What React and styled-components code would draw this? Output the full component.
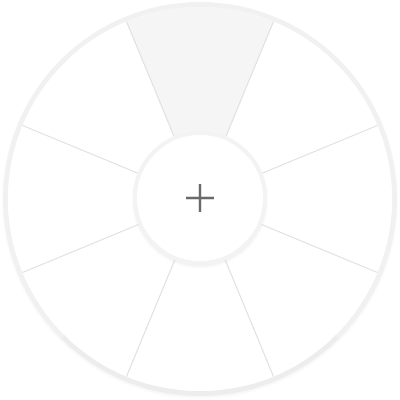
import React from "react";
import styled, { createGlobalStyle } from "styled-components";

const GlobalStyle = createGlobalStyle`
  html, body {
    margin: 0;
    padding: 0;
    background: #ffffff;
    font-family: "Liberation Sans", Arial, sans-serif;
  }
`;

const Page = styled.div`
  width: 400px;
  height: 400px;
  display: flex;
  align-items: flex-start;
  justify-content: center;
  padding-top: 2px;
  box-sizing: border-box;
`;

const Wheel = styled.div`
  width: 394px;
  height: 394px;
  box-sizing: border-box;
  border-radius: 50%;
  border: 5px solid #f1f1f1;
  border-bottom-color: #ededed;
  background: #ffffff;
  box-shadow: 0 2px 3px rgba(0, 0, 0, 0.04);
  display: grid;
  place-items: center;
  overflow: hidden;
  & > * {
    grid-area: 1 / 1;
  }
`;

const Segments = styled.svg`
  width: 384px;
  height: 384px;
  display: block;
`;

const CenterButton = styled.button`
  width: 134px;
  height: 134px;
  box-sizing: border-box;
  border-radius: 50%;
  border: 4px solid #f3f3f3;
  background: #ffffff;
  box-shadow: 0 2px 3px rgba(0, 0, 0, 0.06);
  display: flex;
  align-items: center;
  justify-content: center;
  padding: 0;
  margin-top: -2px;
  cursor: pointer;
`;

const C = 192;
const R = 192;
const COUNT = 8;
const STEP = 360 / COUNT;

const point = (deg, r) => {
  const a = ((deg - 90) * Math.PI) / 180;
  return [C + r * Math.cos(a), C + r * Math.sin(a)];
};

const wedge = (start, end, r) => {
  const [x1, y1] = point(start, r);
  const [x2, y2] = point(end, r);
  return `M${C} ${C} L${x1} ${y1} A${r} ${r} 0 0 1 ${x2} ${y2} Z`;
};

const segments = Array.from({ length: COUNT }, (_, i) => ({
  id: i,
  start: i * STEP - STEP / 2,
  end: i * STEP + STEP / 2,
  active: i === 0,
}));

const PlusIcon = () => (
  <svg width="30" height="30" viewBox="0 0 30 30">
    <line x1="15" y1="1" x2="15" y2="29" stroke="#6a6a6a" strokeWidth="2.4" />
    <line x1="1" y1="15" x2="29" y2="15" stroke="#6a6a6a" strokeWidth="2.4" />
  </svg>
);

export default function App() {
  return (
    <>
      <GlobalStyle />
      <Page>
        <Wheel>
          <Segments viewBox="0 0 384 384">
            {segments.map((s) => (
              <path
                key={s.id}
                d={wedge(s.start, s.end, R + 2)}
                fill={s.active ? "#f5f5f5" : "#ffffff"}
              />
            ))}
            {segments.map((s) => {
              const [x1, y1] = point(s.start, 60);
              const [x2, y2] = point(s.start, R + 2);
              return (
                <line
                  key={s.id}
                  x1={x1}
                  y1={y1}
                  x2={x2}
                  y2={y2}
                  stroke="#e0e0e0"
                  strokeWidth="1.1"
                />
              );
            })}
          </Segments>
          <CenterButton aria-label="Add">
            <PlusIcon />
          </CenterButton>
        </Wheel>
      </Page>
    </>
  );
}
